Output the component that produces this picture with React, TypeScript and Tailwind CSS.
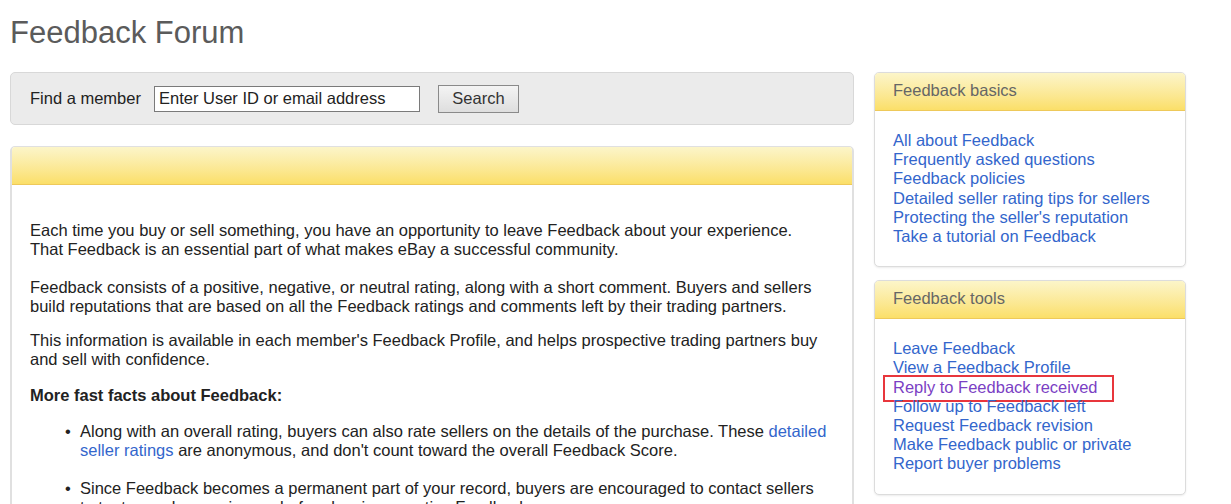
import React from "react";

const linkCls = "text-[#3366cc] hover:underline cursor-pointer";
const FONT = '"Liberation Sans", Arial, sans-serif';

function SideBox({ title, links }: { title: string; links: { t: string; visited?: boolean; boxed?: boolean }[] }) {
  return (
    <div className="rounded-[5px] border border-[#dcdcdc] shadow-[0_1px_2px_rgba(0,0,0,0.08)] bg-white overflow-hidden">
      <div className="h-[38px] bg-gradient-to-b from-[#fcf5c9] to-[#fbdf68] border-b border-[#eec95a] px-[18px] pb-[3px] flex items-center text-[16.5px] text-[#666]">
        {title}
      </div>
      <div className="px-[18px] pt-[20px] pb-[20px] flex flex-col text-[16.5px] leading-[19.2px]">
        {links.map((l) => (
          <div key={l.t} className="relative">
            <span className={l.visited ? "text-[#7b3fc4]" : "text-[#3366cc]"}>{l.t}</span>
            {l.boxed && (
              <div className="absolute left-[-10px] top-[-3px] w-[231px] h-[27px] border-2 border-[#e8363c] pointer-events-none" />
            )}
          </div>
        ))}
      </div>
    </div>
  );
}

export default function App() {
  return (
    <div className="bg-white w-[1231px] h-[504px] overflow-hidden" style={{ fontFamily: FONT }}>
      <div className="pl-[10px] pt-[16px]">
        <h1 className="text-[31px] leading-[34px] text-[#5b5b5b] font-normal">Feedback Forum</h1>
      </div>
      <div className="flex pl-[10px] pt-[22px] gap-[20px]">
        <div className="w-[844px] flex flex-col gap-[21px]">
          <div className="h-[53px] rounded-[5px] bg-[#ebebeb] border border-[#d8d8d8] flex items-center pl-[19px] text-[16.5px] text-[#222]">
            <span>Find a member</span>
            <input
              className="ml-[13px] w-[266px] h-[26px] border border-[#7a7a7a] bg-white px-[4px] text-[16.5px] text-[#222] placeholder:text-[#222] outline-none"
              placeholder="Enter User ID or email address"
              style={{ fontFamily: FONT }}
            />
            <button
              className="ml-[18px] w-[81px] h-[28px] border border-[#8a8a8a] bg-gradient-to-b from-[#f4f4f4] to-[#dedede] text-[16.5px] text-[#333]"
              style={{ fontFamily: FONT }}
            >
              Search
            </button>
          </div>
          <div className="rounded-t-[5px] border border-[#e0e0e0] border-l-2 border-r-2 bg-white overflow-hidden h-[400px]">
            <div className="h-[38px] bg-gradient-to-b from-[#fcf5c9] to-[#fbdf68] border-b border-[#eec95a]" />
            <div className="pl-[18px] pr-[10px] pt-[36px] text-[16.5px] leading-[19px] text-[#222]">
              <p>
                Each time you buy or sell something, you have an opportunity to leave Feedback about your experience.
                <br />
                That Feedback is an essential part of what makes eBay a successful community.
              </p>
              <p className="mt-[19px]">
                Feedback consists of a positive, negative, or neutral rating, along with a short comment. Buyers and sellers
                <br />
                build reputations that are based on all the Feedback ratings and comments left by their trading partners.
              </p>
              <p className="mt-[15px]">
                This information is available in each member's Feedback Profile, and helps prospective trading partners buy
                <br />
                and sell with confidence.
              </p>
              <p className="mt-[17px] font-bold">More fast facts about Feedback:</p>
              <ul className="mt-[17px] pl-[50px]">
                <li className="relative">
                  <span className="absolute left-[-15px]">•</span>
                  Along with an overall rating, buyers can also rate sellers on the details of the purchase. These{" "}
                  <span className={linkCls}>detailed</span>
                  <br />
                  <span className={linkCls}>seller ratings</span> are anonymous, and don't count toward the overall Feedback Score.
                </li>
                <li className="relative mt-[19px]">
                  <span className="absolute left-[-15px]">•</span>
                  Since Feedback becomes a permanent part of your record, buyers are encouraged to contact sellers
                  <br />
                  to try to resolve any issues before leaving negative Feedback.
                </li>
              </ul>
            </div>
          </div>
        </div>
        <div className="w-[312px] flex flex-col gap-[13px]">
          <SideBox
            title="Feedback basics"
            links={[
              { t: "All about Feedback" },
              { t: "Frequently asked questions" },
              { t: "Feedback policies" },
              { t: "Detailed seller rating tips for sellers" },
              { t: "Protecting the seller's reputation" },
              { t: "Take a tutorial on Feedback" },
            ]}
          />
          <SideBox
            title="Feedback tools"
            links={[
              { t: "Leave Feedback" },
              { t: "View a Feedback Profile" },
              { t: "Reply to Feedback received", visited: true, boxed: true },
              { t: "Follow up to Feedback left" },
              { t: "Request Feedback revision" },
              { t: "Make Feedback public or private" },
              { t: "Report buyer problems" },
            ]}
          />
        </div>
      </div>
    </div>
  );
}
